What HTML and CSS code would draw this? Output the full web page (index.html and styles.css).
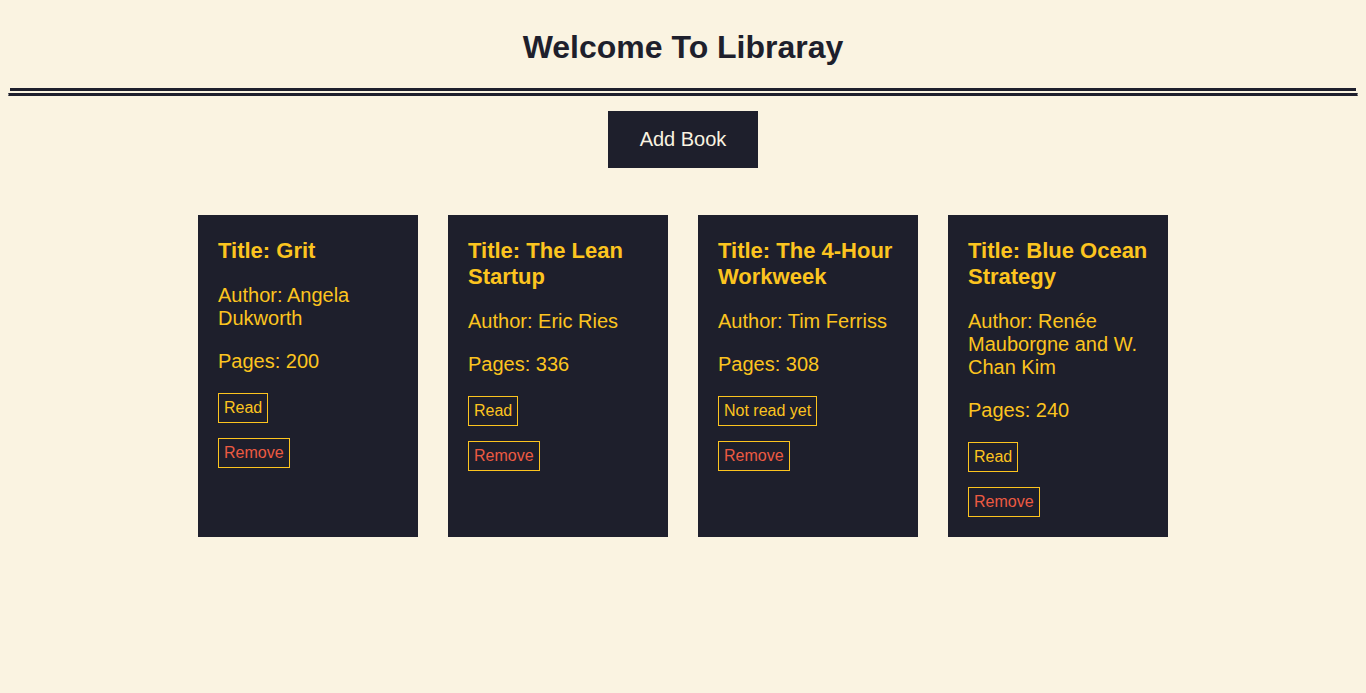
FILE: index.html
```html
<!DOCTYPE html>
<html lang="en">
<head>
<meta charset="utf-8">
<title>Library</title>
<link rel="stylesheet" href="styles.css">
</head>
<body>
<header class="header">
  <h1 class="header-title">Welcome To Libraray</h1>
</header>
<hr class="divider">
<div class="actions">
  <button class="add-btn">Add Book</button>
</div>
<main class="library">
  <div class="card">
    <h2 class="card-title">Title: Grit</h2>
    <p class="card-text">Author: Angela Dukworth</p>
    <p class="card-text">Pages: 200</p>
    <button class="card-btn status">Read</button>
    <button class="card-btn remove">Remove</button>
  </div>
  <div class="card">
    <h2 class="card-title">Title: The Lean Startup</h2>
    <p class="card-text">Author: Eric Ries</p>
    <p class="card-text">Pages: 336</p>
    <button class="card-btn status">Read</button>
    <button class="card-btn remove">Remove</button>
  </div>
  <div class="card">
    <h2 class="card-title">Title: The 4-Hour Workweek</h2>
    <p class="card-text">Author: Tim Ferriss</p>
    <p class="card-text">Pages: 308</p>
    <button class="card-btn status">Not read yet</button>
    <button class="card-btn remove">Remove</button>
  </div>
  <div class="card">
    <h2 class="card-title">Title: Blue Ocean Strategy</h2>
    <p class="card-text">Author: Renée Mauborgne and W. Chan Kim</p>
    <p class="card-text">Pages: 240</p>
    <button class="card-btn status">Read</button>
    <button class="card-btn remove">Remove</button>
  </div>
</main>
</body>
</html>
```
FILE: styles.css
```css
body {
  margin: 8px;
  background: #faf3e1;
  font-family: "Liberation Sans", Arial, sans-serif;
  color: #1e1f2c;
}

.header {
  margin: 0 2px;
  border-bottom: 3px solid #1e1f2c;
  text-align: center;
}

.header-title {
  font-size: 32px;
  font-weight: bold;
  margin: 21px 0 22px;
  line-height: 37px;
}

.divider {
  margin: 2px 0 0;
  height: 1px;
  border: 1px solid #1e1f2c;
  border-left-color: #9a9a9a;
  border-right-color: #9a9a9a;
  background: #1e1f2c;
}

.actions {
  display: flex;
  justify-content: center;
  margin-top: 15px;
}

.add-btn {
  font-family: "Liberation Sans", Arial, sans-serif;
  font-size: 20px;
  line-height: 23px;
  padding: 17px 32px;
  border: none;
  background: #1e1f2c;
  color: #faf3e1;
}

.library {
  display: flex;
  justify-content: center;
  gap: 30px;
  margin-top: 47px;
}

.card {
  width: 220px;
  box-sizing: border-box;
  padding: 23px 20px 20px;
  background: #1e1f2c;
  color: #fcc41f;
  display: flex;
  flex-direction: column;
  align-items: flex-start;
}

.card-title {
  margin: 0 0 20px;
  font-size: 22px;
  line-height: 26px;
  font-weight: bold;
}

.card-text {
  margin: 0 0 20px;
  font-size: 20px;
  line-height: 23px;
}

.card-btn {
  font-family: "Liberation Sans", Arial, sans-serif;
  font-size: 16px;
  line-height: 18px;
  padding: 5px 5px;
  background: transparent;
  border: 1px solid #fcc41f;
  margin: 0 0 15px;
}

.card-btn.status {
  color: #fcc41f;
}

.card-btn.remove {
  color: #ec5a42;
  margin-bottom: 0;
}
```
